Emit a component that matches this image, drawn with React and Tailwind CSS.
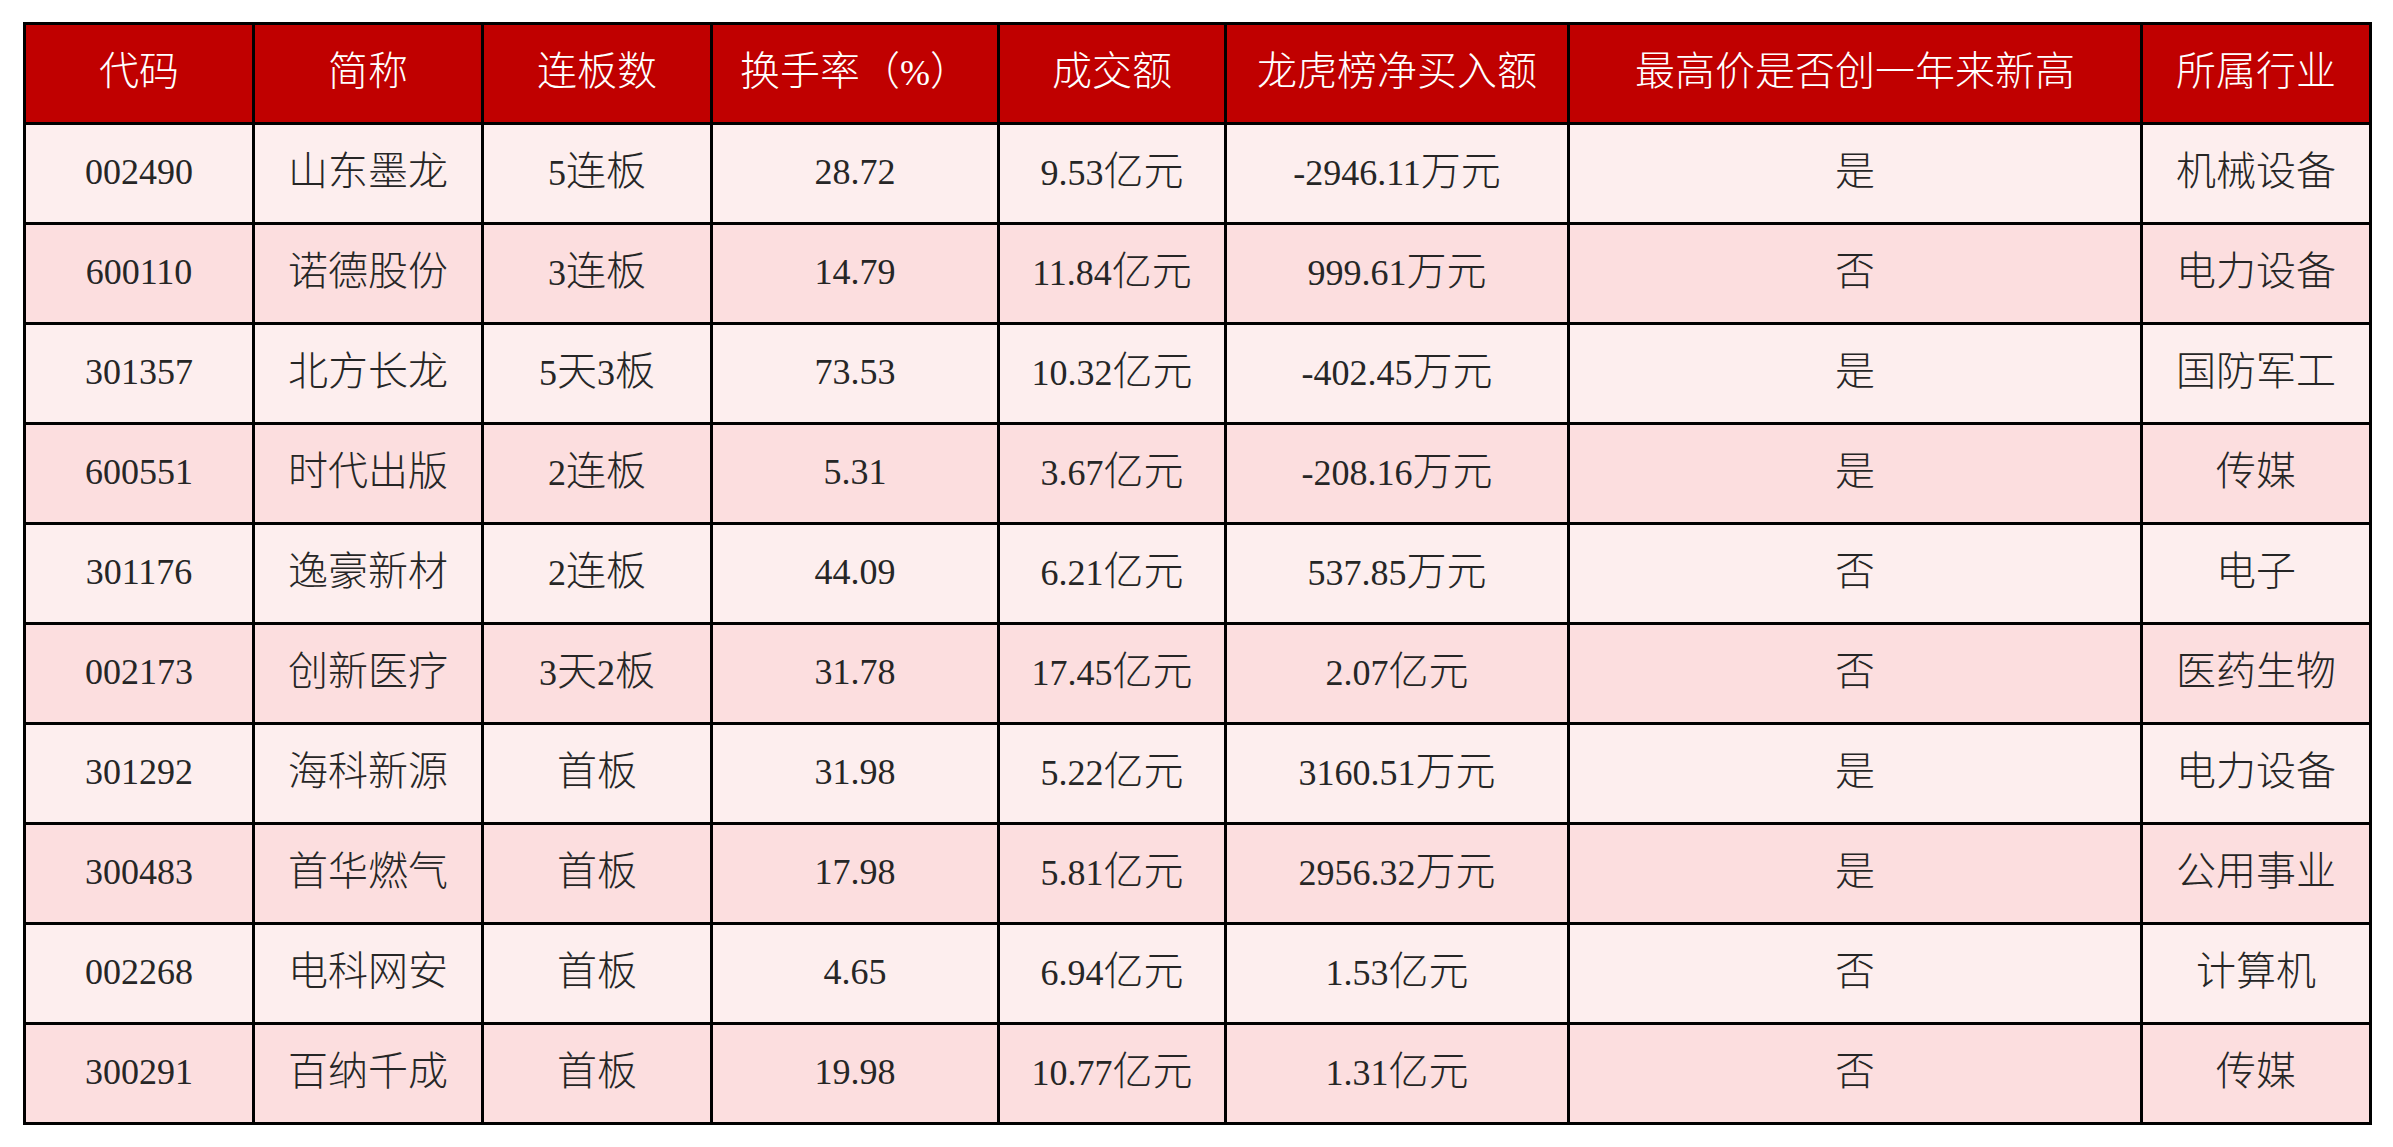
const columns = [
  { title: "代码", width: "w-[229px]" },
  { title: "简称", width: "w-[229px]" },
  { title: "连板数", width: "w-[229px]" },
  { title: "换手率（%）", width: "w-[287px]" },
  { title: "成交额", width: "w-[227px]" },
  { title: "龙虎榜净买入额", width: "w-[343px]" },
  { title: "最高价是否创一年来新高", width: "w-[573px]" },
  { title: "所属行业", width: "w-[229px]" },
];

const rows = [
  ["002490", "山东墨龙", "5连板", "28.72", "9.53亿元", "-2946.11万元", "是", "机械设备"],
  ["600110", "诺德股份", "3连板", "14.79", "11.84亿元", "999.61万元", "否", "电力设备"],
  ["301357", "北方长龙", "5天3板", "73.53", "10.32亿元", "-402.45万元", "是", "国防军工"],
  ["600551", "时代出版", "2连板", "5.31", "3.67亿元", "-208.16万元", "是", "传媒"],
  ["301176", "逸豪新材", "2连板", "44.09", "6.21亿元", "537.85万元", "否", "电子"],
  ["002173", "创新医疗", "3天2板", "31.78", "17.45亿元", "2.07亿元", "否", "医药生物"],
  ["301292", "海科新源", "首板", "31.98", "5.22亿元", "3160.51万元", "是", "电力设备"],
  ["300483", "首华燃气", "首板", "17.98", "5.81亿元", "2956.32万元", "是", "公用事业"],
  ["002268", "电科网安", "首板", "4.65", "6.94亿元", "1.53亿元", "否", "计算机"],
  ["300291", "百纳千成", "首板", "19.98", "10.77亿元", "1.31亿元", "否", "传媒"],
];

// split digits/latin from chinese so each gets its own size
const Mixed = ({ text }) => {
  const parts = text.match(/[\x00-\x7f]+|[^\x00-\x7f]+/g) || [];
  return parts.map((p, k) =>
    /^[\x00-\x7f]+$/.test(p) ? (
      <span key={k} className="text-[36px]">{p}</span>
    ) : (
      <span key={k} className="text-[40px] font-light">{p}</span>
    )
  );
};

export default function App() {
  return (
    <div className="min-h-screen bg-white pl-[23px] pt-[22px] font-['Liberation_Serif','Noto_Sans_CJK_SC',serif]">
      <table className="table-fixed border-collapse w-[2346px] border-[3px] border-black leading-none">
        <colgroup>
          {columns.map((c) => (
            <col key={c.title} className={c.width} />
          ))}
        </colgroup>
        <thead>
          <tr className="h-[100px] bg-[#c00000] text-white">
            {columns.map((c) => (
              <th key={c.title} className="border-[3px] border-black font-normal text-center p-0 pb-[4px]">
                <Mixed text={c.title} />
              </th>
            ))}
          </tr>
        </thead>
        <tbody>
          {rows.map((row, i) => (
            <tr
              key={row[0]}
              className={`h-[100px] text-[#262626] ${i % 2 === 0 ? "bg-[#fdeeee]" : "bg-[#fcdedf]"}`}
            >
              {row.map((cell, j) => (
                <td key={j} className="border-[3px] border-black text-center p-0 pb-[4px]">
                  <Mixed text={cell} />
                </td>
              ))}
            </tr>
          ))}
        </tbody>
      </table>
    </div>
  );
}
